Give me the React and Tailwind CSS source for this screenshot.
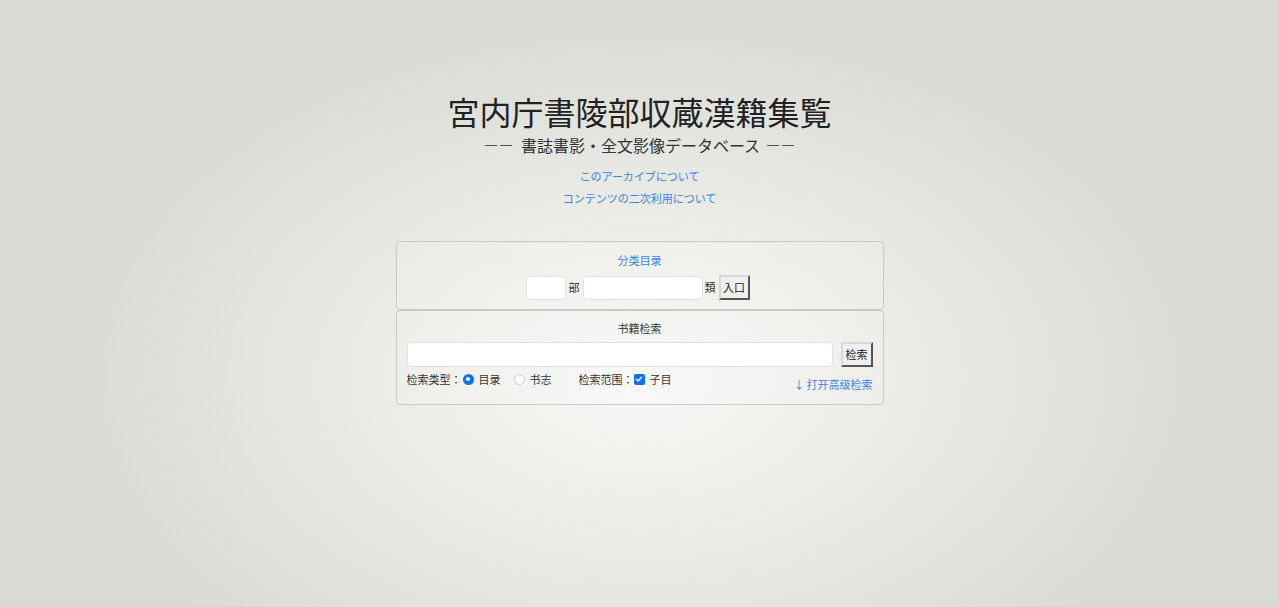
export default function App() {
  return (
    <div
      className="min-h-screen w-full text-[#222] bg-[radial-gradient(ellipse_45%_60%_at_50%_62%,#f8f8f6_0%,#ebebe7_45%,#dadad5_100%)]"
      style={{ fontFamily: '"Noto Sans CJK JP", "Noto Sans", sans-serif' }}
    >
      <div className="flex flex-col items-center pt-[89px]">
        <h1 className="text-[32px] leading-[44px] text-[#222]">宮内庁書陵部収蔵漢籍集覧</h1>
        <p className="text-[16px] leading-[24px] text-[#333] flex items-center">
          <span className="font-['Liberation_Sans'] text-[12px] text-[#555] mr-[3px]">—</span>
          <span className="font-['Liberation_Sans'] text-[12px] text-[#555] mr-[9px]">—</span>
          <span>書誌書影・全文影像データベース</span>
          <span className="font-['Liberation_Sans'] text-[12px] text-[#555] ml-[7px] mr-[3px]">—</span>
          <span className="font-['Liberation_Sans'] text-[12px] text-[#555]">—</span>
        </p>
        <a href="#" className="text-[11px] leading-[16px] text-[#3b82f6] mt-[11px]">このアーカイブについて</a>
        <a href="#" className="text-[11px] leading-[16px] text-[#3b82f6] mt-[6px]">コンテンツの二次利用について</a>

        <div className="w-[488px] mt-[35px] flex flex-col">
          <div className="border border-[#c9c9c5] rounded-[4px] bg-white/10 flex flex-col items-center pt-[10px] pb-[9px]">
            <div className="text-[11px] leading-[16px] text-[#3b82f6]">分类目录</div>
            <div className="flex items-center mt-[7px] mr-[4px] text-[11px] text-[#333]">
              <input className="w-[40px] h-[24px] bg-white border border-[#dfe1e6] rounded-[4px] outline-none" />
              <span className="mx-[3px]">部</span>
              <input className="w-[120px] h-[24px] bg-white border border-[#dfe1e6] rounded-[4px] outline-none" />
              <span className="ml-[2px] mr-[3px]">類</span>
              <button className="w-[31px] h-[25px] bg-[#efefef] border-2 border-t-[#d8d8d8] border-l-[#d8d8d8] border-r-[#555] border-b-[#555] text-[11px] text-[#222]">入口</button>
            </div>
          </div>

          <div className="border border-[#c9c9c5] rounded-[4px] bg-white/10 px-[10px] pt-[9px] pb-[12px]">
            <div className="text-center text-[11px] leading-[16px] text-[#333]">书籍检索</div>
            <div className="flex items-center mt-[6px] gap-[8px]">
              <input className="flex-1 h-[25px] bg-white border border-[#dfe1e6] rounded-[4px] outline-none" />
              <button className="w-[32px] h-[25px] bg-[#efefef] border-2 border-t-[#d8d8d8] border-l-[#d8d8d8] border-r-[#555] border-b-[#555] text-[11px] text-[#222]">检索</button>
            </div>
            <div className="flex items-start justify-between mt-[4px] text-[11px] text-[#333]">
              <div className="flex items-center leading-[16px]">
                <span>检索类型：</span>
                <span className="w-[11px] h-[11px] rounded-full bg-[#0d6efd] flex items-center justify-center ml-[1px]">
                  <span className="w-[4px] h-[4px] rounded-full bg-white" />
                </span>
                <span className="ml-[5px]">目录</span>
                <span className="w-[11px] h-[11px] rounded-full bg-white border border-[#ccc] ml-[13px]" />
                <span className="ml-[5px]">书志</span>
                <span className="ml-[27px]">检索范围：</span>
                <span className="w-[11px] h-[11px] rounded-[2px] bg-[#0d6efd] flex items-center justify-center ml-[0px]">
                  <svg width="8" height="8" viewBox="0 0 8 8" fill="none">
                    <path d="M1.3 4.2 L3.2 6 L6.7 2" stroke="white" strokeWidth="1.4" strokeLinecap="round" strokeLinejoin="round" />
                  </svg>
                </span>
                <span className="ml-[5px]">子目</span>
              </div>
              <a href="#" className="text-[11px] leading-[16px] text-[#3b82f6] mt-[5px]">↓<span className="ml-[2px]">打开高级检索</span></a>
            </div>
          </div>
        </div>
      </div>
    </div>
  )
}
